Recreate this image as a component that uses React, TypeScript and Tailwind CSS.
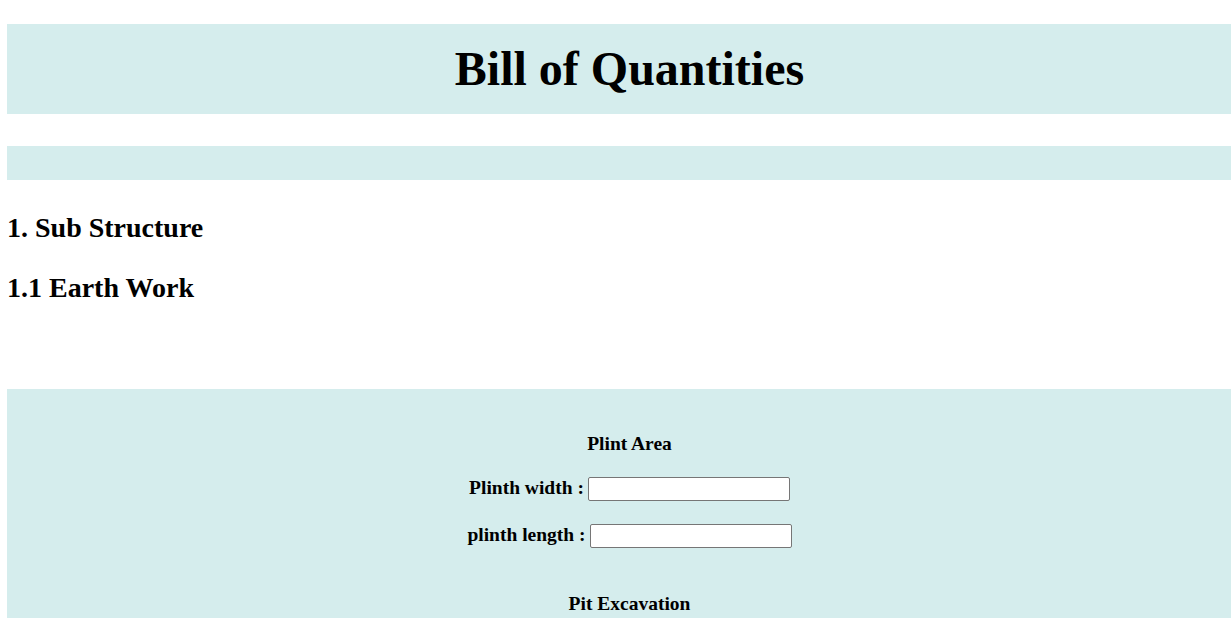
export default function App() {
	return (
		<div className="h-[618px] w-full overflow-hidden bg-white font-['Liberation_Serif',serif] text-black">
			<div className="ml-[7px] w-[1245px]">
				{/* Title band */}
				<div className="mt-[24px] flex h-[90px] items-center justify-center bg-[#d5eded]">
					<h1 className="text-[48px] font-bold leading-[56px]">
						Bill of Quantities
					</h1>
				</div>

				{/* Empty band */}
				<div className="mt-[32px] h-[34px] bg-[#d5eded]" />

				{/* Section headings */}
				<h2 className="mt-[32px] text-[28px] font-bold leading-[32px]">
					1. Sub Structure
				</h2>
				<h2 className="mt-[28px] text-[28px] font-bold leading-[32px]">
					1.1 Earth Work
				</h2>

				{/* Form band */}
				<div className="mt-[85px] h-[400px] bg-[#d5eded] pt-[43px] text-[19.5px] font-bold leading-[24px]">
					<p className="text-center">Plint Area</p>

					<div className="mt-[21px] flex h-[24px] items-start justify-center gap-[4px]">
						<label className="leading-[21px]">Plinth width :</label>
						<input
							type="text"
							className="h-[24px] w-[202px] rounded-[2px] border border-[#767676] bg-white"
						/>
					</div>

					<div className="mt-[23px] flex h-[24px] items-start justify-center gap-[4px]">
						<label className="leading-[21px]">plinth length :</label>
						<input
							type="text"
							className="h-[24px] w-[202px] rounded-[2px] border border-[#767676] bg-white"
						/>
					</div>

					<p className="mt-[44px] text-center">Pit Excavation</p>
				</div>
			</div>
		</div>
	);
}
